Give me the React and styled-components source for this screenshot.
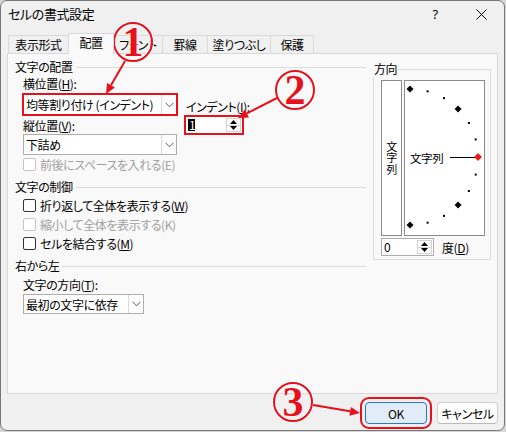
import React from 'react';
import styled, { createGlobalStyle, css } from 'styled-components';

const RED = '#e8101a';

const GlobalStyle = createGlobalStyle`
  html, body {
    margin: 0;
    padding: 0;
    background: #d6d6d6;
  }
  body {
    font-family: "Noto Sans CJK JP", "Noto Sans", sans-serif;
    font-size: 12px;
    letter-spacing: -0.4px;
    color: #000;
    font-feature-settings: "palt";
  }
  * { box-sizing: border-box; }
  u { text-decoration-thickness: 1px; text-underline-offset: 1px; }
`;

const Window = styled.div`
  position: relative;
  width: 505px;
  height: 431px;
  background: #f0f0f0;
  border: 1px solid #777;
  border-radius: 7px;
  overflow: hidden;
  display: flex;
  flex-direction: column;
`;

const TitleBar = styled.div`
  height: 26px;
  display: flex;
  align-items: center;
  padding-left: 7px;
`;

const Title = styled.div`
  flex: 1;
  font-size: 13px;
  line-height: 16px;
`;

const TitleButton = styled.div`
  width: 46px;
  height: 26px;
  display: flex;
  align-items: center;
  justify-content: center;
  font-family: "Noto Sans", sans-serif;
  font-size: 13px;
`;

const TabStrip = styled.div`
  height: 20px;
  margin-top: 6px;
  padding-left: 7px;
  display: flex;
  align-items: flex-end;
`;

const Tab = styled.div`
  width: ${p => p.$w}px;
  height: 18px;
  margin-left: -1px;
  border: 1px solid #d9d9d9;
  border-bottom: none;
  background: #f0f0f0;
  display: flex;
  align-items: center;
  justify-content: center;
  line-height: 14px;
  padding-top: 1px;
  &:first-child { margin-left: 0; }
  ${p => p.$active && css`
    position: relative;
    z-index: 1;
    height: 21px;
    margin-bottom: -1px;
    background: #f9f9f9;
    padding-top: 0;
    padding-bottom: 2px;
  `}
`;

const Panel = styled.div`
  width: 491px;
  height: 341px;
  margin-left: 6px;
  background: #f9f9f9;
  border: 1px solid #d9d9d9;
  padding: 5px 0 0 7px;
  display: flex;
  align-items: flex-start;
`;

const LeftColumn = styled.div`
  width: 351px;
  display: flex;
  flex-direction: column;
`;

const SectionHeader = styled.div`
  height: 16px;
  margin-top: ${p => p.$mt || 0}px;
  display: flex;
  align-items: center;
  gap: 3px;
  line-height: 16px;
  white-space: nowrap;
  &::after {
    content: '';
    flex: 1;
    height: 1px;
    background: #dcdcdc;
  }
`;

const Indent = styled.div`
  margin-left: 8px;
  display: flex;
  flex-direction: column;
  align-items: flex-start;
`;

const FieldLabel = styled.div`
  height: 16px;
  line-height: 16px;
  margin-top: ${p => p.$mt || 0}px;
  margin-left: ${p => p.$ml || 0}px;
  white-space: nowrap;
`;

const PlacementRow = styled.div`
  display: flex;
  align-items: flex-start;
  margin-top: 1px;
`;

const FieldStack = styled.div`
  display: flex;
  flex-direction: column;
`;

const IndentField = styled.div`
  margin-left: 8px;
  padding-top: 23px;
  display: flex;
  flex-direction: column;
`;

const highlight = css`
  outline: 2px solid ${RED};
  outline-offset: -1px;
`;

const Combo = styled.div`
  width: ${p => p.$w}px;
  height: ${p => p.$h || 21}px;
  margin-top: ${p => p.$mt || 0}px;
  display: flex;
  background: #fff;
  border: 1px solid #adadad;
  ${p => p.$hl && highlight}
`;

const ComboText = styled.div`
  flex: 1;
  padding-left: 2px;
  display: flex;
  align-items: center;
  white-space: nowrap;
  overflow: hidden;
`;

const ComboArrow = styled.div`
  width: 15px;
  border-left: 1px solid #d9d9d9;
  display: flex;
  align-items: center;
  justify-content: center;
`;

const Spin = styled.div`
  width: ${p => p.$w}px;
  height: 18px;
  margin-top: ${p => p.$mt || 0}px;
  display: flex;
  background: #fff;
  border: 1px solid #adadad;
  ${p => p.$hl && highlight}
`;

const SpinValue = styled.div`
  flex: 1;
  display: flex;
  align-items: center;
  padding-left: 2px;
  line-height: 12px;
`;

const Selected = styled.span`
  background: #000;
  color: #fff;
  padding: 0 0 0 1px;
  line-height: 12px;
`;

const SpinButtons = styled.div`
  width: 15px;
  margin: 1px;
  border: 1px solid #d4d4d4;
  display: flex;
  flex-direction: column;
`;

const SpinHalf = styled.div`
  flex: 1;
  display: flex;
  align-items: center;
  justify-content: center;
  & + & { border-top: 1px solid #d4d4d4; }
`;

const CheckRow = styled.div`
  height: ${p => p.$h || 18}px;
  margin-top: 1px;
  display: flex;
  align-items: center;
  gap: 4px;
  white-space: nowrap;
  color: ${p => (p.$disabled ? '#a0a0a0' : '#000')};
`;

const CheckBox = styled.span`
  width: 13px;
  height: 13px;
  border: 1px solid ${p => (p.$disabled ? '#c4c4c4' : '#333')};
  border-radius: 2px;
  background: #fff;
`;

const OrientationGroup = styled.fieldset`
  width: 118px;
  height: 199px;
  margin: 2px 0 0 7px;
  padding: 0 0 0 7px;
  border: 1px solid #dcdcdc;
  min-width: 0;
  & > legend {
    padding: 0 1px;
    margin-left: -8px;
    line-height: 16px;
  }
`;

const DialRow = styled.div`
  margin-top: 3px;
  display: flex;
  gap: 2px;
`;

const VerticalBox = styled.div`
  width: 21px;
  height: 156px;
  border: 1px solid #8c8c8c;
  background: #fff;
  display: flex;
  flex-direction: column;
  align-items: center;
  justify-content: center;
  line-height: 11.5px;
  font-size: 11px;
`;

const DialBox = styled.div`
  position: relative;
  width: 81px;
  height: 156px;
  border: 1px solid #8c8c8c;
  background: #fff;
  display: flex;
  align-items: center;
  padding-left: 5px;
`;

const DialText = styled.span`
  position: relative;
  font-size: 11.5px;
  line-height: 14px;
`;

const DialDrawing = styled.svg`
  position: absolute;
  left: 0;
  top: 0;
`;

const DegreeRow = styled.div`
  margin-top: 2px;
  display: flex;
  align-items: center;
  gap: 8px;
`;

const Footer = styled.div`
  display: flex;
  justify-content: flex-end;
  gap: 10px;
  padding: 8px 6px 0 0;
`;

const DialogButton = styled.div`
  width: ${p => p.$w}px;
  height: 22px;
  border-radius: 4px;
  display: flex;
  align-items: center;
  justify-content: center;
  background: ${p => (p.$primary ? '#e0ecf8' : '#fdfdfd')};
  border: 1px solid ${p => (p.$primary ? '#2b78c8' : '#cfcfcf')};
  ${p => !p.$primary && css`border-bottom-color: #b8b8b8;`}
  ${p => p.$hl && css`
    outline: 2px solid ${RED};
    outline-offset: 3px;
  `}
`;

const Callout = styled.div`
  position: absolute;
  left: ${p => p.$x - 21}px;
  top: ${p => p.$y - 21}px;
  width: 40px;
  height: 40px;
  border: 2px solid ${RED};
  border-radius: 50%;
  box-shadow: 0 0 0 1px rgba(255, 255, 255, 0.8), inset 0 0 0 1px rgba(255, 255, 255, 0.8);
  display: flex;
  align-items: center;
  justify-content: center;
  font-family: "Liberation Serif", serif;
  font-weight: bold;
  font-size: 42px;
  letter-spacing: 0;
  line-height: 36px;
  color: ${RED};
  text-shadow: 0 0 2px #fff, 0 0 1px #fff;
  pointer-events: none;
`;

const ArrowLayer = styled.svg`
  position: absolute;
  left: 0;
  top: 0;
  pointer-events: none;
`;

const Chevron = () => (
  <svg width="9" height="6" viewBox="0 0 9 6">
    <polyline points="0.5,0.8 4.5,4.8 8.5,0.8" fill="none" stroke="#555" strokeWidth="1" />
  </svg>
);

const Triangle = ({ down }) => (
  <svg width="7" height="4" viewBox="0 0 7 4">
    <polygon points={down ? '0,0 7,0 3.5,4' : '3.5,0 7,4 0,4'} fill="#000" />
  </svg>
);

const CloseIcon = () => (
  <svg width="11" height="11" viewBox="0 0 11 11">
    <path d="M0.5 0.5 L10.5 10.5 M10.5 0.5 L0.5 10.5" stroke="#000" strokeWidth="1" />
  </svg>
);

const SpinControl = ({ value, selected, width, hl, mt }) => (
  <Spin $w={width} $hl={hl} $mt={mt}>
    <SpinValue>{selected ? <Selected>{value}</Selected> : value}</SpinValue>
    <SpinButtons>
      <SpinHalf><Triangle /></SpinHalf>
      <SpinHalf><Triangle down /></SpinHalf>
    </SpinButtons>
  </Spin>
);

const ComboBox = ({ children, ...rest }) => (
  <Combo {...rest}>
    <ComboText>{children}</ComboText>
    <ComboArrow><Chevron /></ComboArrow>
  </Combo>
);

// dial marks: every 15 degrees on a half circle
const DIAL_CX = 5;
const DIAL_CY = 76;
const DIAL_R = 68;

const Dial = () => {
  const marks = [];
  for (let a = -90; a <= 90; a += 15) {
    const rad = (a * Math.PI) / 180;
    const x = DIAL_CX + DIAL_R * Math.cos(rad);
    const y = DIAL_CY + DIAL_R * Math.sin(rad);
    if (a === 0) continue;
    if (a % 45 === 0) {
      marks.push(
        <polygon key={a} points={`${x},${y - 3.5} ${x + 3.5},${y} ${x},${y + 3.5} ${x - 3.5},${y}`} fill="#000" />
      );
    } else {
      marks.push(<rect key={a} x={x - 1} y={y - 1} width="2" height="2" fill="#000" />);
    }
  }
  const rx = DIAL_CX + DIAL_R;
  return (
    <DialDrawing width="79" height="154" viewBox="0 0 79 154">
      {marks}
      <line x1="45" y1={DIAL_CY + 0.5} x2={rx - 3} y2={DIAL_CY + 0.5} stroke="#000" strokeWidth="1" />
      <polygon
        points={`${rx},${DIAL_CY - 3.5} ${rx + 3.5},${DIAL_CY} ${rx},${DIAL_CY + 3.5} ${rx - 3.5},${DIAL_CY}`}
        fill="#ff1010"
        stroke="#a00"
        strokeWidth="0.6"
      />
    </DialDrawing>
  );
};

const head = (x1, y1, x2, y2, len = 10, half = 4.5) => {
  const dx = x2 - x1;
  const dy = y2 - y1;
  const d = Math.hypot(dx, dy);
  const ux = dx / d;
  const uy = dy / d;
  const bx = x2 - ux * len;
  const by = y2 - uy * len;
  return {
    base: [bx, by],
    points: `${x2},${y2} ${bx - uy * half},${by + ux * half} ${bx + uy * half},${by - ux * half}`,
  };
};

const arrows = [
  [125, 61, 106, 94],
  [277, 98, 238, 118],
  [313, 405, 360, 413],
];

const Arrows = () => (
  <ArrowLayer width="503" height="429" viewBox="1 1 503 429">
    {arrows.map(([x1, y1, x2, y2], i) => {
      const h = head(x1, y1, x2, y2);
      return (
        <g key={i}>
          <line x1={x1} y1={y1} x2={h.base[0]} y2={h.base[1]} stroke={RED} strokeWidth="2" />
          <polygon points={h.points} fill={RED} />
        </g>
      );
    })}
  </ArrowLayer>
);

const tabs = [
  { label: '表示形式', w: 61 },
  { label: '配置', w: 46, active: true },
  { label: 'フォント', w: 50 },
  { label: '罫線', w: 46 },
  { label: '塗りつぶし', w: 64 },
  { label: '保護', w: 44 },
];

const App = () => (
  <>
    <GlobalStyle />
    <Window>
      <TitleBar>
        <Title>セルの書式設定</Title>
        <TitleButton>?</TitleButton>
        <TitleButton><CloseIcon /></TitleButton>
      </TitleBar>

      <TabStrip>
        {tabs.map(t => (
          <Tab key={t.label} $w={t.w} $active={t.active}>{t.label}</Tab>
        ))}
      </TabStrip>

      <Panel>
        <LeftColumn>
          <SectionHeader>文字の配置</SectionHeader>
          <Indent>
            <PlacementRow>
              <FieldStack>
                <FieldLabel>横位置(<u>H</u>):</FieldLabel>
                <ComboBox $w={154} $mt={2} $hl>均等割り付け (インデント)</ComboBox>
                <FieldLabel $mt={3}>縦位置(<u>V</u>):</FieldLabel>
                <ComboBox $w={154}>下詰め</ComboBox>
              </FieldStack>
              <IndentField>
                <FieldLabel $ml={1}>インデント(<u>I</u>):</FieldLabel>
                <SpinControl value="1" selected width={58} hl mt={1} />
              </IndentField>
            </PlacementRow>
            <CheckRow $h={16} $disabled>
              <CheckBox $disabled />
              <span>前後にスペースを入れる(E)</span>
            </CheckRow>
          </Indent>

          <SectionHeader $mt={7}>文字の制御</SectionHeader>
          <Indent>
            <CheckRow>
              <CheckBox />
              <span>折り返して全体を表示する(<u>W</u>)</span>
            </CheckRow>
            <CheckRow $disabled>
              <CheckBox $disabled />
              <span>縮小して全体を表示する(K)</span>
            </CheckRow>
            <CheckRow>
              <CheckBox />
              <span>セルを結合する(<u>M</u>)</span>
            </CheckRow>
          </Indent>

          <SectionHeader $mt={6}>右から左</SectionHeader>
          <Indent>
            <FieldLabel $mt={3}>文字の方向(<u>T</u>):</FieldLabel>
            <ComboBox $w={121} $h={20} $mt={1}>最初の文字に依存</ComboBox>
          </Indent>
        </LeftColumn>

        <OrientationGroup>
          <legend>方向</legend>
          <DialRow>
            <VerticalBox>
              <span>文</span>
              <span>字</span>
              <span>列</span>
            </VerticalBox>
            <DialBox>
              <Dial />
              <DialText>文字列</DialText>
            </DialBox>
          </DialRow>
          <DegreeRow>
            <SpinControl value="0" width={53} />
            <span>度(<u>D</u>)</span>
          </DegreeRow>
        </OrientationGroup>
      </Panel>

      <Footer>
        <DialogButton $w={62} $primary $hl>OK</DialogButton>
        <DialogButton $w={61}>キャンセル</DialogButton>
      </Footer>

      <Callout $x={133} $y={42}>1</Callout>
      <Callout $x={295} $y={90}>2</Callout>
      <Callout $x={293} $y={402}>3</Callout>
      <Arrows />
    </Window>
  </>
);

export default App;
